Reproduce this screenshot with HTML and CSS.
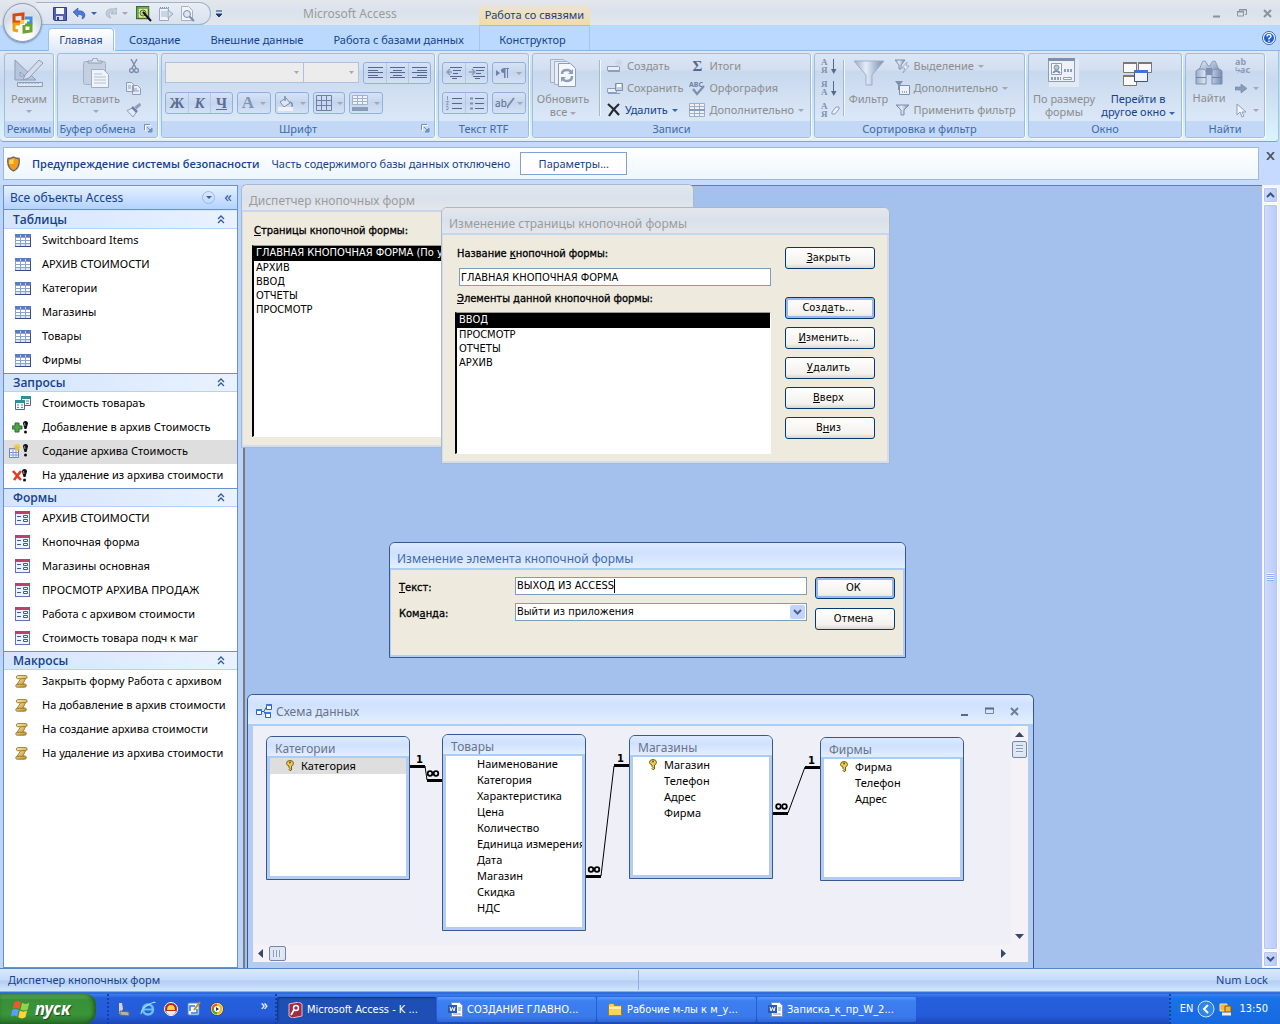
FILE: index.html
```html
<!DOCTYPE html>
<html lang="ru">
<head>
<meta charset="utf-8">
<title>Microsoft Access</title>
<link rel="stylesheet" href="styles.css">
</head>
<body>
<svg class="defs" aria-hidden="true">
  <defs>
    <linearGradient id="metal" x1="0" y1="0" x2="1" y2="1"><stop offset="0" stop-color="#e3eaf5"/><stop offset="1" stop-color="#7f94b8"/></linearGradient>
    <linearGradient id="metalH" x1="0" y1="0" x2="1" y2="0"><stop offset="0" stop-color="#9aacca"/><stop offset=".4" stop-color="#e6edf7"/><stop offset="1" stop-color="#758bb2"/></linearGradient>
    <linearGradient id="gold" x1="0" y1="0" x2="1" y2="1"><stop offset="0" stop-color="#fff3b0"/><stop offset="1" stop-color="#c08a1c"/></linearGradient>
    <linearGradient id="cellblue" x1="0" y1="0" x2="1" y2="1"><stop offset="0" stop-color="#fff"/><stop offset="1" stop-color="#c3d2ef"/></linearGradient>
    <symbol id="table" viewBox="0 0 16 13"><rect x="0" y="0" width="16" height="13" fill="#8aa2cf"/><rect x="0" y="0" width="16" height="3" fill="#5b7cc0"/><g fill="#fff"><rect x="1" y="4" width="4" height="2"/><rect x="6" y="4" width="4" height="2"/><rect x="11" y="4" width="4" height="2"/><rect x="1" y="7" width="4" height="2"/><rect x="6" y="7" width="4" height="2"/><rect x="11" y="7" width="4" height="2"/></g><g fill="#d9e4f7"><rect x="1" y="10" width="4" height="2"/><rect x="6" y="10" width="4" height="2"/><rect x="11" y="10" width="4" height="2"/></g><path d="M5.500 1v2M10.500 1v2" stroke="#c5d5f2"/><path d="M0 12.500h16M15.500 3v10" stroke="#3a4f7a"/></symbol>
    <symbol id="form" viewBox="0 0 15 14"><rect x=".5" y=".5" width="14" height="13" fill="#eef3fb" stroke="#5f77a8"/><rect x="0" y="0" width="15" height="3" fill="#b8416f"/><path d="M2 5.500h4M2 9.500h4" stroke="#3f5b97"/><path d="M8.500 4.500h4v2h-4zM8.500 8.500h4v2h-4z" fill="#fff" stroke="#3f5b97"/></symbol>
    <symbol id="macro" viewBox="0 0 14 14"><path d="M3 .6h8.500q2 .4 1.500 2.200-.3 1-1.500.9L8.500 9.800h2.800q1.200.5.9 1.900-.4 1.500-1.800 1.500H2.200q-1.600-.3-1.400-1.800.2-1.200 1.400-1.300L6 4H2.500Q1.200 3.600 1.400 2.200 1.800.8 3 .6z" fill="url(#gold)" stroke="#80601c" stroke-width=".8"/><path d="M6 3.900h5.500M2.200 10h6.300" stroke="#8a6418" stroke-width=".8"/></symbol>
    <symbol id="bang" viewBox="0 0 5 13"><path d="M2.500 0Q5 0 5 2.500L3.500 8h-2L0 2.500Q0 0 2.500 0z" fill="#111"/><circle cx="2.500" cy="11" r="1.500" fill="#111"/><path d="M1.500 2l.5 3" stroke="#999"/></symbol>
    <symbol id="key" viewBox="0 0 8 11"><path d="M4 .5q3.500 0 3.500 3Q7.500 5 5.500 6v4L4 10.700 3 9.500 4 8.500 3 7.500V6Q.5 5 .5 3.500.5.500 4 .5z" fill="#e8cc55" stroke="#7b5c10"/><circle cx="4" cy="2.500" r="1" fill="#7b5c10"/></symbol>
    <symbol id="chev" viewBox="0 0 8 9"><path d="M1 4l3-3 3 3M1 8l3-3 3 3" fill="none" stroke="#2f5b9f" stroke-width="1.300"/></symbol>
    <symbol id="word" viewBox="0 0 15 15"><path d="M3.500.5h8l3 3v11h-11z" fill="#fff" stroke="#7f93b8"/><path d="M10 6h3M10 8h3M5 12h8" stroke="#7c96c6"/><rect x="0" y="3" width="9" height="8" fill="#2b5bb0"/><path d="M2 5l1 4 1.500-3.500L6 9l1-4" fill="none" stroke="#fff"/></symbol>
    <symbol id="launch" viewBox="0 0 9 9"><path d="M.5 6V.5H6" fill="none" stroke="#7390b8"/><path d="M3 3l4 4M8 4v4H4z" stroke="#7390b8" fill="#7390b8"/><path d="M1.500 7V1.500H7" fill="none" stroke="#fff"/></symbol>
  </defs>
</svg>
<div class="app">
  <header class="header">
    <div class="title-left">
      <div class="qat">
        <button aria-label="Сохранить"><svg width="14" height="14" viewBox="0 0 14 14"><path d="M.5.5h13v13h-12l-1-1z" fill="#5460b8" stroke="#343c8c"/><rect x="3" y="1" width="8" height="6" fill="#f4f7ff"/><rect x="3" y="9" width="7" height="4" fill="#d5dbef"/><rect x="4" y="10" width="2" height="3" fill="#343c8c"/></svg></button>
        <button aria-label="Отменить"><svg width="13" height="13" viewBox="0 0 13 13"><path d="M0 5L5 1v3q6-1 7 4 0 3-3 4 2-5-4-4.500V10z" fill="#4f79d4" stroke="#2f55b0" stroke-width=".6"/></svg></button><span class="arr blue"></span>
        <button aria-label="Повторить" disabled><svg width="12" height="13" viewBox="0 0 12 13"><path d="M12 1v6H6l2-2q-4-1-4 2 0 2 2 4-5-1-5-5 1-5 8-4z" fill="#c5cedd" stroke="#9daac2" stroke-width=".7"/></svg></button><span class="arr"></span>
        <button aria-label="Конструктор"><svg width="16" height="16" viewBox="0 0 16 16"><rect x=".5" y=".5" width="12" height="12" fill="#f3e77d" stroke="#2f6f3b" stroke-width="1.500"/><path d="M1 2h12M2 1v11" stroke="#59a05e" stroke-width="1.500"/><circle cx="7" cy="7" r="3" fill="#b9cf9a" stroke="#4b7a3c"/><path d="M7 6l8 9" stroke="#111" stroke-width="2"/></svg></button>
        <button aria-label="Экспорт" disabled><svg width="16" height="16" viewBox="0 0 16 16"><path d="M1.500 2.500h9v12h-9z" fill="#eef2f8" stroke="#9aa8c0"/><path d="M2 1.500h9" stroke="#7f8fae" stroke-dasharray="1 1"/><path d="M3 6h6M3 8h6M3 10h6" stroke="#a9b5ca"/><path d="M10 4l5 4-5 4z" fill="#d5dceb" stroke="#93a3bf"/></svg></button>
        <button aria-label="Просмотр" disabled><svg width="15" height="16" viewBox="0 0 15 16"><path d="M1.500.5h7l4 4v10h-11z" fill="#f1f4fa" stroke="#a5b1c6"/><circle cx="7" cy="8" r="3.500" fill="#dbe5f4" stroke="#7d8daa"/><path d="M9.500 10.500l4.500 4.500" stroke="#7d8daa" stroke-width="2"/></svg></button>
      </div>
      <button class="qat-more" aria-label="Настройка панели"><svg width="6" height="8" viewBox="0 0 6 8"><path d="M0 1h6M0 4h6L3 7z" fill="#1f3d73" stroke="#1f3d73" stroke-width="1"/></svg></button>
      <h1>Microsoft Access</h1>
    </div>
    <div class="ctx-cap">Работа со связями</div>
    <div class="win-btns">
      <button aria-label="Свернуть"><svg width="9" height="9"><path d="M1 7.500h7" stroke="#8d939d" stroke-width="2"/></svg></button>
      <button aria-label="Восстановить"><svg width="10" height="9"><path d="M2.500 3V.5h7v5H8M.5 3h6v4h-6z" fill="none" stroke="#8d939d"/><path d="M0 2.500h7M2 1h8" stroke="#8d939d"/></svg></button>
      <button aria-label="Закрыть"><svg width="9" height="9"><path d="M1 1l7 7M8 1L1 8" stroke="#8d939d" stroke-width="2"/></svg></button>
    </div>
    <nav class="tabs" aria-label="Лента">
      <a href="#" class="tab active">Главная</a><a href="#" class="tab">Создание</a><a href="#" class="tab">Внешние данные</a><a href="#" class="tab">Работа с базами данных</a>
    </nav>
    <a href="#" class="ctx-tab">Конструктор</a>
    <div class="help-cell"><button aria-label="Справка"><svg width="14" height="14" viewBox="0 0 14 14"><circle cx="7" cy="7" r="6.500" fill="#fff" stroke="#3e62a8"/><circle cx="7" cy="7" r="5" fill="#1f5fd0"/><path d="M5 5.500q0-2 2-2t2 1.800Q9 6.500 7 7.500V8.500M7 9.500v1.500" fill="none" stroke="#fff" stroke-width="1.400"/></svg></button></div>
    <button class="office" aria-label="Кнопка Office"><svg width="23" height="24" viewBox="0 0 23 24"><g fill="none" stroke-width="3"><path d="M12 9V3L3 4v7h6" stroke="#d8480e"/><path d="M14 7h6v5h-4" stroke="#3c8fd8"/><path d="M9 13H3v6l4 1" stroke="#e9a40c"/><path d="M14 14h6v6l-7 1v-7" stroke="#6aa52a"/></g><path d="M9 9h4v4H9z" fill="#f7c948"/></svg></button>
  </header>

  <section class="ribbon">
    <div class="group g-mode"><div class="gbody">
      <button class="big" disabled><svg width="32" height="30" viewBox="0 0 32 30"><path d="M2 2v20h21zM7 14v4h5z" fill="#b8c6dd" fill-rule="evenodd" stroke="#8b9cbb"/><path d="M10 22l2-5L26 2l4 3-14 15z" fill="#d5ddeb" stroke="#8b9cbb"/><path d="M4.500 24.500h25v4h-25z" fill="#dfe6f1" stroke="#8b9cbb"/><path d="M7 24v2M10 24v2M13 24v2M16 24v2M19 24v2M22 24v2M25 24v2" stroke="#8b9cbb"/></svg><span>Режим</span><i class="arr"></i></button>
    </div><div class="glabel">Режимы</div></div>

    <div class="group g-clip"><div class="gbody">
      <button class="big wide" disabled><svg width="28" height="30" viewBox="0 0 28 30"><rect x="1.500" y="3.500" width="22" height="23" rx="2" fill="#c5cfe2" stroke="#a2b0ca"/><path d="M6 5h14V3h-4q0-3-3-3t-3 3H6z" fill="#dde4ef" stroke="#8d9dba"/><path d="M9.500 11.500h12l5 5v13h-17z" fill="#f0f4fa" stroke="#9fadc8"/><path d="M12 16h8M12 19h12M12 22h12M12 25h12" stroke="#b3bfd5"/></svg><span>Вставить</span><i class="arr"></i></button>
      <div class="rows r0"><button disabled aria-label="Вырезать"><svg width="10" height="15" viewBox="0 0 10 15"><path d="M2 0l5 9M8 0L3 9" stroke="#7e8fae" stroke-width="1.500"/><circle cx="2.500" cy="11.500" r="2" fill="none" stroke="#7e8fae" stroke-width="1.300"/><circle cx="7.500" cy="11.500" r="2" fill="none" stroke="#7e8fae" stroke-width="1.300"/></svg></button><button disabled aria-label="Копировать"><svg width="15" height="13" viewBox="0 0 15 13"><path d="M.5.500h5l2 2v7h-7zM6.500 3.500h5l3 3v6h-8z" fill="#e8eef7" stroke="#8d9dba"/><path d="M8 7h3M8 9h5M2 4h3M2 6h3" stroke="#8d9dba"/></svg></button><button disabled aria-label="Формат по образцу"><svg width="15" height="14" viewBox="0 0 15 14"><path d="M14.500 1l-5 4" stroke="#8d9dba" stroke-width="3"/><path d="M1 7.500L6.500 5l4 4L7 14z" fill="#e4eaf3" stroke="#8d9dba"/><path d="M6 4l5 5" stroke="#6f81a3" stroke-width="2.500"/></svg></button></div>
    </div><div class="glabel">Буфер обмена<svg class="dl" width="9" height="9"><use href="#launch"/></svg></div></div>

    <div class="group g-font"><div class="gbody col">
      <div class="line"><span class="combos"><select class="sel-font" disabled aria-label="Шрифт"><option></option></select><select class="sel-size" disabled aria-label="Размер"><option></option></select></span>
        <span class="seg"><button disabled aria-label="По левому краю"><svg width="15" height="12"><path d="M0 .5h15M0 3.500h10M0 5.500h15M0 8.500h10M0 10.500h15" stroke="#54688f"/></svg></button><button disabled aria-label="По центру"><svg width="15" height="12"><path d="M0 .5h15M3 3.500h9M0 5.500h15M3 8.500h9M0 10.500h15" stroke="#54688f"/></svg></button><button disabled aria-label="По правому краю"><svg width="15" height="12"><path d="M0 .5h15M5 3.500h10M0 5.500h15M5 8.500h10M0 10.500h15" stroke="#54688f"/></svg></button></span></div>
      <div class="line"><span class="seg serif"><button disabled><b>Ж</b></button><button disabled><b><i>К</i></b></button><button disabled><b><u>Ч</u></b></button></span>
        <span class="seg serif"><button class="w34 big-a" disabled>A<i class="arr"></i></button></span>
        <span class="seg"><button class="w34" disabled aria-label="Заливка"><svg width="16" height="15" viewBox="0 0 16 15"><path d="M2 6l6-4 4 5-6 4z" fill="#dfe6f1" stroke="#7e8fae"/><path d="M7 0v5M12 6q3 1 2 5" fill="none" stroke="#7e8fae" stroke-width="1.500"/><path d="M0 13h15" stroke="#eef1f6" stroke-width="4"/></svg><i class="arr"></i></button></span>
        <span class="seg"><button class="w32" disabled aria-label="Сетка"><svg width="16" height="16"><path d="M.5.500h15v15H.5zM5.500 0v16M10.500 0v16M0 5.500h16M0 10.500h16" fill="none" stroke="#6d80a5"/></svg><i class="arr"></i></button></span>
        <span class="seg"><button class="w34" disabled aria-label="Цвет строк"><svg width="16" height="16"><path d="M.5.500h15v9H.5zM5.500 0v10M10.500 0v10M0 3.500h16M0 6.500h16" fill="#eef2f8" stroke="#a3b1ca"/><path d="M0 14h16" stroke="#8b9cbb" stroke-width="4"/></svg><i class="arr"></i></button></span></div>
    </div><div class="glabel">Шрифт<svg class="dl" width="9" height="9"><use href="#launch"/></svg></div></div>

    <div class="group g-rtf"><div class="gbody col">
      <div class="line"><span class="seg"><button disabled aria-label="Уменьшить отступ"><svg width="16" height="14"><path d="M4 1.500h12M7 4.500h8M7 7.500h5M4 10.500h12M6 12.500h5" stroke="#54688f"/><path d="M1 6h5M4 3L1 6l3 3" fill="none" stroke="#8b9cbb" stroke-width="1.500"/></svg></button><button disabled aria-label="Увеличить отступ"><svg width="16" height="14"><path d="M4 1.500h12M7 4.500h8M7 7.500h5M4 10.500h12M6 12.500h5" stroke="#54688f"/><path d="M0 6h5M3 3l3 3-3 3" fill="none" stroke="#8b9cbb" stroke-width="1.500"/></svg></button></span>
        <span class="seg"><button class="w34" disabled aria-label="Направление"><svg width="14" height="10"><path d="M0 2l4 3-4 3zM9 0q-4 0-4 2.500T8 5v5h1.500V1H11v9h1V1h1V0z" fill="#6d80a5"/></svg><i class="arr"></i></button></span></div>
      <div class="line"><span class="seg"><button disabled aria-label="Нумерация"><svg width="16" height="14"><path d="M6 2.500h10M6 7.500h10M6 12.500h10" stroke="#54688f"/><path d="M1.500 0v4M0 5.500h2.500L.5 8.500h2M0 10.500h2v3H0" fill="none" stroke="#8b9cbb"/></svg></button><button disabled aria-label="Маркеры"><svg width="14" height="14"><path d="M5 2.500h9M5 7.500h9M5 12.500h9" stroke="#54688f"/><path d="M0 2.500h3M0 7.500h3M0 12.500h3" stroke="#7e8fae" stroke-width="2"/></svg></button></span>
        <span class="seg"><button class="w34 ab" disabled>ab<svg width="8" height="12"><path d="M7 1L1 9l-1 2" stroke="#7e8fae" stroke-width="2" fill="none"/></svg><i class="arr"></i></button></span></div>
    </div><div class="glabel">Текст RTF</div></div>

    <div class="group g-rec"><div class="gbody">
      <button class="big refresh" disabled><svg width="26" height="30" viewBox="0 0 26 30"><path d="M.5 1.500h13l3 3v20h-16z" fill="#dfe6f2" stroke="#a2b0ca"/><path d="M4.500 3.500h13l3 3v20h-16z" fill="#e8edf6" stroke="#a2b0ca"/><path d="M8.500 5.500h12l5 5v18h-17z" fill="#f4f7fc" stroke="#8d9dba"/><path d="M12 16q0-4 5-4 3 0 4 2M22 18q0 5-5 5-3 0-4-2" fill="none" stroke="#8d9dba" stroke-width="2.500"/><path d="M23 11v5h-5zM11 24v-5h5z" fill="#8d9dba"/></svg><span>Обновить<br>все <i class="arr"></i></span></button>
      <i class="vsep"></i>
      <div class="rows r1"><button disabled><svg width="16" height="14"><path d="M.5 7.500h12v4H.5z" fill="#e8eef7" stroke="#8d9dba"/><path d="M1 12.500h12" stroke="#8d9dba"/><path d="M12 0v8M8 4h8M9 1l6 6M15 1L9 7" stroke="#c6d2e6"/></svg>Создать</button><button disabled><svg width="16" height="13"><path d="M.5 6.500h9v4h-9z" fill="#e8eef7" stroke="#8d9dba"/><path d="M8.500 1.500h7v7h-7z" fill="#c0cce2" stroke="#7e8fae"/><path d="M10 2h4v3h-4z" fill="#fff"/><path d="M1 11.500h12" stroke="#8d9dba"/></svg>Сохранить</button><button class="on"><svg width="14" height="14"><path d="M1 1q6 5 11 11M12 1Q6 6 2 13" fill="none" stroke="#26282c" stroke-width="2.200"/></svg>Удалить<i class="arr blue"></i></button></div>
      <div class="rows r2"><button disabled><span class="sigma">Σ</span>Итоги</button><button disabled><svg width="16" height="15"><text x="0" y="6" class="abc">ABC</text><path d="M4 8l4 5 7-8" fill="none" stroke="#7e8fae" stroke-width="2.200"/></svg>Орфография</button><button disabled><svg width="16" height="14"><path d="M.5.500h15v13H.5zM5.500 0v14M10.500 0v14M0 3.500h16M0 10.500h16" fill="#eef2f8" stroke="#9fadc8"/><path d="M0 7h16" stroke="#8b9cbb" stroke-width="2"/></svg>Дополнительно<i class="arr"></i></button></div>
    </div><div class="glabel">Записи</div></div>

    <div class="group g-sort"><div class="gbody">
      <div class="rows az"><button disabled aria-label="По возрастанию"><span>А<br>Я</span><svg width="6" height="15"><path d="M2.500 0v12" stroke="#54688f"/><path d="M0 10h5.500L2.800 15z" fill="#54688f"/></svg></button><button disabled aria-label="По убыванию"><span>Я<br>А</span><svg width="6" height="15"><path d="M2.500 0v12" stroke="#54688f"/><path d="M0 10h5.500L2.800 15z" fill="#54688f"/></svg></button><button disabled aria-label="Очистить"><span>А<br>Я</span><svg width="9" height="9"><path d="M1 6l4-5h3l0 2-4 5H1z" fill="#eef2f8" stroke="#8d9dba"/></svg></button></div>
      <i class="vsep"></i>
      <button class="big filt" disabled><svg width="32" height="30" viewBox="0 0 32 30"><path d="M1 3h30L19 17v10h-6V17z" fill="url(#metalH)" stroke="#9fadc8"/></svg><span>Фильтр</span></button>
      <div class="rows r3"><button disabled><svg width="15" height="14"><path d="M0 1h10L6 6v4H4V6z" fill="url(#metalH)" stroke="#7e8fae"/><path d="M12 3L7 9h3l-2 5 6-7h-3z" fill="#eef2f8" stroke="#9fadc8"/></svg>Выделение<i class="arr"></i></button><button disabled><svg width="15" height="14"><path d="M4.500 4.500h10v9h-10z" fill="#eef2f8" stroke="#7e8fae"/><path d="M0 0h8L5 4v5H3V4z" fill="#7e8fae"/><path d="M7 11h1M9 11h1M11 11h1" stroke="#54688f"/></svg>Дополнительно<i class="arr"></i></button><button disabled><svg width="15" height="12"><path d="M1 1h13L9 6v5H6V6z" fill="url(#metalH)" stroke="#7e8fae"/></svg>Применить фильтр</button></div>
    </div><div class="glabel">Сортировка и фильтр</div></div>

    <div class="group g-win"><div class="gbody">
      <button class="big fit" disabled><svg width="32" height="30" viewBox="0 0 32 30"><rect x="1" y="1" width="30" height="28" fill="#e3eaf5"/><path d="M.5.500h26v23H.5z" fill="#edf1f8" stroke="#8d9dba"/><path d="M0 1.500h27" stroke="#7e8fae" stroke-width="3"/><path d="M3.500 5.500h10v11h-10z" fill="#fff" stroke="#8d9dba"/><circle cx="8.500" cy="9.500" r="2.500" fill="#b7c4da" stroke="#7e8fae"/><path d="M5 15q3-4 7 0" fill="none" stroke="#7e8fae" stroke-width="2"/><path d="M16 12.500h8M3 20.500h10" stroke="#8d9dba" stroke-width="3" stroke-dasharray="2 1"/><path d="M15.500 19.500h8v2h-8z" fill="#fff" stroke="#8d9dba"/></svg><span>По размеру<br>формы</span></button>
      <button class="big on switch"><svg width="32" height="30" viewBox="0 0 32 30"><g fill="#fafafa" stroke="#7d7770"><path d="M1.500 4.500h13v10h-13zM16.500 4.500h13v10h-13zM1.500 17.500h13v10h-13z"/></g><path d="M1 5h14M16 5h14M1 18h14" stroke="#7d7770" stroke-width="2"/><path d="M12.500 12.500h13v11h-13z" fill="#f0f4ff" stroke="#3a5580"/><path d="M12 13.500h14" stroke="#3f73dc" stroke-width="3"/></svg><span>Перейти в<br>другое окно <i class="arr blue"></i></span></button>
    </div><div class="glabel">Окно</div></div>

    <div class="group g-find"><div class="gbody">
      <button class="big find" disabled><svg width="28" height="28" viewBox="0 0 28 28"><path d="M4 11L7 4q0-2 2-2t2.500 2L13 7h2l1.500-3Q17 2 19 2t2 2l3 7-4 2H8z" fill="url(#metal)" stroke="#8b9cbb"/><path d="M1 13q0-3 5-3t5 3v12H1zM17 13q0-3 5-3t5 3v12H17z" fill="url(#metalH)" stroke="#7e8fae"/><path d="M11 9h6v7h-6z" fill="#7e90b2"/><path d="M1 18.500h10M17 18.500h10" stroke="#6f82a6"/></svg><span>Найти</span></button>
      <div class="rows r4"><button class="rep" disabled aria-label="Заменить"><svg width="17" height="16"><text x="0" y="7">ab</text><text x="5" y="15">ac</text><path d="M1 9v3.500h4M3 10.500l2 2-2 2" fill="none" stroke="#8b9cbb"/></svg></button><button disabled aria-label="Перейти"><svg width="12" height="9"><path d="M0 3h6V0l6 4.500L6 9V6H0z" fill="#8b9cbb" stroke="#6d80a5" stroke-width=".6"/></svg><i class="arr"></i></button><button disabled aria-label="Выделить"><svg width="12" height="15"><path d="M2 1v11l3-3 2 5 2-1-2-4h4z" fill="#f4f6fa" stroke="#8d9dba"/></svg><i class="arr"></i></button></div>
    </div><div class="glabel">Найти</div></div>
  </section>

  <section class="message">
    <div class="msg-box">
      <svg width="13" height="16" viewBox="0 0 13 16"><path d="M6.500 1Q9 2.500 12 2.500q1.500 9-5.500 12.500Q-.5 11.500 1 2.500 4 2.500 6.500 1z" fill="#f59a16" stroke="#5e6470" stroke-width="1.300"/><path d="M2.500 4Q5 4 6.500 2.800V8H2.200z" fill="#ffd257"/></svg>
      <strong>Предупреждение системы безопасности</strong>
      <span>Часть содержимого базы данных отключено</span>
      <button class="opts">Параметры...</button>
    </div>
    <button class="msg-x" aria-label="Закрыть"><svg width="9" height="8"><path d="M1 0l7 8M8 0L1 8" stroke="#53565c" stroke-width="1.800"/></svg></button>
  </section>

  <main class="work">
    <aside class="nav">
      <div class="nav-head"><span>Все объекты Access</span><button class="nav-dd" aria-label="Фильтр"><i class="arr blue"></i></button><button class="nav-fold">«</button></div>
      <section><h2>Таблицы<svg width="8" height="9"><use href="#chev"/></svg></h2><ul>
        <li><svg width="16" height="13"><use href="#table"/></svg><a href="#">Switchboard Items</a></li>
        <li><svg width="16" height="13"><use href="#table"/></svg><a href="#">АРХИВ СТОИМОСТИ</a></li>
        <li><svg width="16" height="13"><use href="#table"/></svg><a href="#">Категории</a></li>
        <li><svg width="16" height="13"><use href="#table"/></svg><a href="#">Магазины</a></li>
        <li><svg width="16" height="13"><use href="#table"/></svg><a href="#">Товары</a></li>
        <li><svg width="16" height="13"><use href="#table"/></svg><a href="#">Фирмы</a></li></ul></section>
      <section><h2>Запросы<svg width="8" height="9"><use href="#chev"/></svg></h2><ul>
        <li><svg width="16" height="15" viewBox="0 0 16 15"><path d="M6.500.500h9v9h-9z" fill="#f4f8fa" stroke="#4d6a80"/><path d="M6 1.500h10" stroke="#2f8f94" stroke-width="3"/><path d="M.5 4.500h9v9h-9z" fill="#f4f8fa" stroke="#4d6a80"/><path d="M0 5.500h10" stroke="#2f8f94" stroke-width="3"/><path d="M2 9h2M6 9h2M2 11.500h2M6 11.500h2M11 5h3M11 7.500h3" stroke="#6d7f9a"/></svg><a href="#">Стоимость товараъ</a></li>
        <li><svg class="q" width="17" height="13" viewBox="0 0 17 13"><path d="M3 2h4v3h3v3H7v3H3V8H0V5h3z" fill="#4fa34a" stroke="#2a6b2c"/><use href="#bang" x="11" width="5" height="13"/></svg><a href="#">Добавление в архив Стоимость</a></li>
        <li class="sel"><svg class="q" width="20" height="14" viewBox="0 0 20 14"><path d="M.5 4.500h9v9h-9z" fill="#fff" stroke="#6d86b8"/><path d="M0 5h9M1 8.500h8M1 11h8M4 6v8M7 6v8" stroke="#7b97cd"/><path d="M8 0v7M4.500 3.500h7M5.500 1l5 5M10.500 1l-5 5" stroke="#f0c526" stroke-width="1.200"/><use href="#bang" x="14" width="5" height="13"/></svg><a href="#">Содание архива Стоимость</a></li>
        <li><svg class="q" width="17" height="13" viewBox="0 0 17 13"><path d="M1 2l8 9M9 2L2 11" stroke="#e23a22" stroke-width="2.600"/><use href="#bang" x="10" width="5" height="13"/></svg><a href="#">На удаление из архива стоимости</a></li></ul></section>
      <section><h2>Формы<svg width="8" height="9"><use href="#chev"/></svg></h2><ul>
        <li><svg width="15" height="14"><use href="#form"/></svg><a href="#">АРХИВ СТОИМОСТИ</a></li>
        <li><svg width="15" height="14"><use href="#form"/></svg><a href="#">Кнопочная форма</a></li>
        <li><svg width="15" height="14"><use href="#form"/></svg><a href="#">Магазины основная</a></li>
        <li><svg width="15" height="14"><use href="#form"/></svg><a href="#">ПРОСМОТР АРХИВА ПРОДАЖ</a></li>
        <li><svg width="15" height="14"><use href="#form"/></svg><a href="#">Работа с архивом стоимости</a></li>
        <li><svg width="15" height="14"><use href="#form"/></svg><a href="#">Стоимость товара подч к маг</a></li></ul></section>
      <section><h2>Макросы<svg width="8" height="9"><use href="#chev"/></svg></h2><ul>
        <li><svg width="13" height="13"><use href="#macro"/></svg><a href="#">Закрыть форму Работа с архивом</a></li>
        <li><svg width="13" height="13"><use href="#macro"/></svg><a href="#">На добавление в архив стоимости</a></li>
        <li><svg width="13" height="13"><use href="#macro"/></svg><a href="#">На создание архива стоимости</a></li>
        <li><svg width="13" height="13"><use href="#macro"/></svg><a href="#">На удаление из архива стоимости</a></li></ul></section>
    </aside>
    <div class="mdi"></div>
    <div class="vscroll"><button aria-label="Вверх"><svg width="9" height="6"><path d="M1 5l3.500-3.500L8 5" fill="none" stroke="#3c5587" stroke-width="2"/></svg></button><div class="thumb"><i></i></div><button aria-label="Вниз"><svg width="9" height="6"><path d="M1 1l3.500 3.500L8 1" fill="none" stroke="#3c5587" stroke-width="2"/></svg></button></div>

    <section class="window inactive dispatcher"><h3>Диспетчер кнопочных форм</h3>
      <div class="wbody"><div class="lab"><u>С</u>траницы кнопочной формы:</div>
        <ul class="list"><li class="sel">ГЛАВНАЯ КНОПОЧНАЯ ФОРМА (По умолчанию)</li><li>АРХИВ</li><li>ВВОД</li><li>ОТЧЕТЫ</li><li>ПРОСМОТР</li></ul></div>
    </section>

    <section class="window inactive page"><h3>Изменение страницы кнопочной формы</h3>
      <div class="wbody">
        <div class="fields"><label class="lab" for="pname">Название <u>к</u>нопочной формы:</label><input id="pname" value="ГЛАВНАЯ КНОПОЧНАЯ ФОРМА">
          <div class="lab"><u>Э</u>лементы данной кнопочной формы:</div>
          <ul class="list"><li class="sel">ВВОД</li><li>ПРОСМОТР</li><li>ОТЧЕТЫ</li><li>АРХИВ</li></ul></div>
        <div class="btns"><button class="xp"><span><u>З</u>акрыть</span></button><button class="xp default"><span>Созд<u>а</u>ть...</span></button><button class="xp"><span><u>И</u>зменить...</span></button><button class="xp"><span><u>У</u>далить</span></button><button class="xp"><span><u>В</u>верх</span></button><button class="xp"><span>В<u>н</u>из</span></button></div>
      </div>
    </section>

    <section class="window element"><h3>Изменение элемента кнопочной формы</h3>
      <div class="wbody">
        <div class="form"><label class="lab" for="etext"><u>Т</u>екст:</label><span class="caret-box"><input id="etext" value="ВЫХОД ИЗ ACCESS"></span>
          <label class="lab" for="ecmd">Ком<u>а</u>нда:</label><select id="ecmd"><option>Выйти из приложения</option></select></div>
        <div class="btns"><button class="xp default">ОК</button><button class="xp">Отмена</button></div>
      </div>
    </section>

    <section class="window schema"><h3><svg width="16" height="15" viewBox="0 0 16 15"><g fill="#fff" stroke="#3c5f9f"><path d="M.5 5.500h5v5h-5zM10.500.500h5v5h-5zM9.500 8.500h5v5h-5z"/></g><path d="M0 6h6M10 1h6M9 9h6" stroke="#3f78d8" stroke-width="2"/><path d="M6 7.500h2l2-4M8 7.500l2 4" fill="none" stroke="#3c5f9f"/></svg><span>Схема данных</span>
        <button aria-label="Свернуть"><svg width="9" height="10"><path d="M1 8h7" stroke="#5c6a80" stroke-width="2"/></svg></button><button aria-label="Развернуть"><svg width="9" height="9"><path d="M.5 1.500h8v5h-8z" fill="none" stroke="#7186a8"/><path d="M0 1.500h9" stroke="#5c6a80" stroke-width="2"/></svg></button><button aria-label="Закрыть"><svg width="9" height="9"><path d="M1 1l7 7M8 1L1 8" stroke="#6d7f9e" stroke-width="2"/></svg></button></h3>
      <div class="sbody">
        <div class="canvas">
          <svg class="links" width="760" height="218"><g stroke="#000" fill="none"><path d="M157 40.500h15M174 54.500h15M333 150.500h15M361 39.500h15M520 87.500h15M552 41.500h15" stroke-width="3"/><path d="M172 40l2 14M348 150l13-110M535 87l17-46"/></g>
            <g fill="none" stroke="#000" stroke-width="1.800"><circle cx="177" cy="47.500" r="2.300"/><circle cx="183" cy="47.500" r="2.300"/><circle cx="338" cy="143.500" r="2.300"/><circle cx="344" cy="143.500" r="2.300"/><circle cx="525.500" cy="80.500" r="2.300"/><circle cx="531.500" cy="80.500" r="2.300"/></g>
            <text x="163" y="37">1</text><text x="364" y="36">1</text><text x="555" y="38">1</text></svg>
          <div class="node n1"><h4>Категории</h4><ul><li class="sel"><svg width="8" height="11"><use href="#key"/></svg>Категория</li></ul></div>
          <div class="node n2"><h4>Товары</h4><ul><li>Наименование</li><li>Категория</li><li>Характеристика</li><li>Цена</li><li>Количество</li><li>Единица измерения</li><li>Дата</li><li>Магазин</li><li>Скидка</li><li>НДС</li></ul></div>
          <div class="node n3"><h4>Магазины</h4><ul><li><svg width="8" height="11"><use href="#key"/></svg>Магазин</li><li>Телефон</li><li>Адрес</li><li>Фирма</li></ul></div>
          <div class="node n4"><h4>Фирмы</h4><ul><li><svg width="8" height="11"><use href="#key"/></svg>Фирма</li><li>Телефон</li><li>Адрес</li></ul></div>
        </div>
        <div class="sv"><svg width="9" height="5"><path d="M0 5L4.500 0 9 5z" fill="#35486d"/></svg><i class="grip"></i><svg width="9" height="5"><path d="M0 0l4.500 5L9 0z" fill="#35486d"/></svg></div>
        <div class="sh"><svg width="5" height="9"><path d="M5 0L0 4.500 5 9z" fill="#35486d"/></svg><i class="grip"></i><svg width="5" height="9"><path d="M0 0l5 4.500L0 9z" fill="#35486d"/></svg></div>
      </div>
    </section>
  </main>

  <div class="status"><span>Диспетчер кнопочных форм</span><span class="r">Num Lock</span></div>

  <footer class="taskbar">
    <button class="start"><svg width="20" height="19" viewBox="0 0 18 17"><path d="M3 2q3-2 6 0L7.500 8q-3-2-6 0z" fill="#f0582c"/><path d="M10 2.500q3 2 6.500 0L15 8.500q-3 2-6.500 0z" fill="#8fd44c"/><path d="M1 9q3-2 6 0l-1.500 6q-3-2-5.500 0z" fill="#5b9cff"/><path d="M8 9.500q3 2 6.500 0L13 15.500q-3 2-6.500 0z" fill="#ffd433"/></svg><span>пуск</span></button>
    <div class="ql">
      <svg width="16" height="16"><path d="M2 2h3l1 6-3 5H2z" fill="#d9d3c5"/><path d="M3 10l9 1v4l-9-1z" fill="#b8b3a6" stroke="#666"/></svg>
      <svg width="16" height="16"><circle cx="8" cy="8.500" r="5" fill="none" stroke="#6cc1f5" stroke-width="2.500"/><path d="M3 8.500h10" stroke="#6cc1f5" stroke-width="2"/><path d="M1 13Q1 8 8 4t7-2" fill="none" stroke="#a7dbfa" stroke-width="1.300"/></svg>
      <svg width="16" height="16"><circle cx="8" cy="8" r="6.500" fill="#b3271e" stroke="#fff"/><path d="M4 9q0-5 4-5t4 5z" fill="#f7d24a"/><path d="M3 10h10q-1 4-5 4t-5-4z" fill="#f3eee6"/></svg>
      <svg width="16" height="16"><rect x="2" y="2" width="11" height="12" rx="1" fill="#f4f8ff" stroke="#4e86c6"/><path d="M4 10V5h5M5 12h6V8" fill="none" stroke="#2e7bd0" stroke-width="1.500"/><path d="M14 1L8 9" stroke="#c98d20" stroke-width="2"/></svg>
      <svg width="16" height="16"><circle cx="8" cy="8" r="6.500" fill="#fff" stroke="#444"/><path d="M8 8V2.500A5.500 5.500 0 0 0 2.500 8z" fill="#e2601e"/><path d="M8 8H2.500A5.500 5.500 0 0 0 8 13.500z" fill="#53a52e"/><path d="M8 8v5.500A5.500 5.500 0 0 0 8 2.500z" fill="#f0be1c"/><circle cx="8" cy="8" r="3" fill="#fff"/><path d="M7 6l3 2-3 2z" fill="#16355f"/></svg>
      <span class="more">»</span>
    </div>
    <div class="tasks">
      <button class="active"><svg width="15" height="16" viewBox="0 0 15 16"><path d="M1 2l10-2 3 2v12l-10 2-3-2z" fill="#a12b45" stroke="#e7b9c3"/><circle cx="8" cy="6" r="2.500" fill="none" stroke="#fff" stroke-width="1.500"/><path d="M6 8l-3 5" stroke="#fff" stroke-width="1.800"/></svg><span>Microsoft Access - K ...</span></button>
      <button><svg width="15" height="15"><use href="#word"/></svg><span>СОЗДАНИЕ ГЛАВНО...</span></button>
      <button><svg width="15" height="13" viewBox="0 0 15 13"><path d="M.5 2.500l1-2h4l1 2h7v10H.5z" fill="#f7d35b" stroke="#a77d1c"/><path d="M1 5h12" stroke="#fff2b5" stroke-width="2"/></svg><span>Рабочие м-лы к м_у...</span></button>
      <button><svg width="15" height="15"><use href="#word"/></svg><span>Записка_к_пр_W_2...</span></button>
    </div>
    <div class="tray"><span>EN</span><svg width="18" height="18"><circle cx="9" cy="9" r="8" fill="#2f86e8" stroke="#cfe6fb"/><path d="M11 5L7 9l4 4" fill="none" stroke="#fff" stroke-width="2"/></svg><svg width="14" height="15"><path d="M1 2h7v7H1z" fill="#f2b83a" stroke="#fbe3a4"/><path d="M6 4h6v6H6z" fill="#f2b83a" stroke="#8a5b10"/><path d="M3 12h9" stroke="#eee" stroke-width="3"/></svg><time>13:50</time></div>
  </footer>
</div>
</body>
</html>
```
FILE: styles.css
```css
* { box-sizing: border-box; }
body { margin: 0; font: 11px/14px "Noto Sans", "Open Sans", sans-serif; color: #000; overflow: hidden; }
button, input, select { font: inherit; color: inherit; margin: 0; padding: 0; border: 0; background: none; }
h1, h2, h3, h4, ul { margin: 0; padding: 0; font-weight: normal; list-style: none; }
a { color: inherit; text-decoration: none; }
svg { flex: none; display: block; }
.defs { position: absolute; width: 0; height: 0; }
.app { display: flex; flex-direction: column; height: 100vh; background: #c6daff; }

.arr { display: inline-block; flex: none; border: 3px solid transparent; border-top-color: #a2a8b4; border-bottom: 0; width: 6px; height: 3px; vertical-align: middle; }
.arr.blue { border-top-color: #3565ae; }

/* Title bar and tab strip */
.header { position: relative; display: grid; grid-template-columns: 479px 111px 1fr; grid-template-rows: 27px 23px; color: #15428b;
  background: linear-gradient(#e4e8ed, #dae2ec 12px, #e3e7eb 25px, #b5dcf0 25px, #bbd9fe 27px); border-bottom: 1px solid #8db2e3; }
.title-left { display: flex; align-items: center; padding-left: 36px; }
.qat { display: flex; align-items: center; gap: 6px; height: 23px; width: 175px; padding-left: 17px; border: 1px solid #9fb3cc; border-left: 0; border-radius: 0 12px 12px 0; background: linear-gradient(#e9eef5, #d8e1ee); }
.qat .arr { margin: 0 2px 0 -1px; }
.qat-more { margin: 0 0 0 5px; }
h1 { flex: 1; font-size: 12px; color: #9b9b9b; padding-left: 81px; line-height: 28px; }
.ctx-cap { margin-top: 5px; text-align: center; line-height: 20px; height: 21px; border-bottom: 1px solid #f0b822; background: linear-gradient(#ebe3da, #f1dda6); white-space: nowrap; }
.win-btns { display: flex; justify-content: flex-end; align-items: center; gap: 16px; padding-right: 8px; }
.tabs { display: flex; padding: 1px 0 0 48px; white-space: nowrap; }
.tab { line-height: 24px; padding: 0 15px; }
.tab.active { width: 66px; padding: 0; text-align: center; border: 1px solid #a0c0ea; border-bottom: 0; border-radius: 4px 4px 0 0; background: linear-gradient(#fff, #dfe9f7); line-height: 22px; margin-bottom: -1px; box-shadow: 1px 0 #fff; }
.ctx-tab { text-align: center; line-height: 26px; padding-right: 4px; border: solid #a9c4e4; border-width: 0 1px; }
.help-cell { display: flex; justify-content: flex-end; align-items: center; padding: 0 4px 2px 0; }
.office { position: absolute; left: 3px; top: 3px; width: 39px; height: 39px; border-radius: 50%; border: 1px solid #8b9ab1; display: grid; place-items: center; background: radial-gradient(circle at 50% 80%, #fff 20%, #d4dce8 60%, #eef2f7); box-shadow: 0 1px 2px #7084a3; }

/* Ribbon */
.ribbon { display: flex; gap: 3px; padding: 2px 4px 3px; height: 91px; margin-right: 1px; border-right: 1px solid #9cc; border-bottom: 1px solid #7ea6cf; border-radius: 0 0 4px 4px; background: linear-gradient(#dde8f7, #c8d8ee 30px, #dcf4fe); }
.group { flex: none; display: flex; flex-direction: column; border: 1px solid #9dbfdc; border-radius: 3px; background: linear-gradient(#dbe5f5, #d3dff0 16px, #c8d8ed 17px, #dbe8f8 68px); box-shadow: 1px 1px #f4faff; overflow: hidden; }
.gbody { flex: 1; display: flex; }
.glabel { position: relative; height: 16px; line-height: 15px; text-align: center; color: #3e6aaa; background: #c2d8f6; white-space: nowrap; }
.dl { position: absolute; right: 4px; top: 3px; }
.g-mode { width: 50px; } .g-clip { width: 101px; } .g-font { width: 274px; } .g-rtf { width: 91px; } .g-rec { width: 279px; } .g-sort { width: 211px; } .g-win { width: 154px; } .g-find { width: 80px; }
.g-clip .glabel { padding-right: 20px; }
.group button { color: #8d8d8d; white-space: nowrap; }
.group button.on { color: #15428b; }
.big { display: flex; flex-direction: column; align-items: center; padding-top: 4px; width: 48px; }
.big span { margin-top: 4px; line-height: 13px; text-align: center; }
.big > .arr { margin-top: 5px; }
.big.wide { width: 68px; padding-left: 8px; }
.refresh { width: 60px; } .filt { width: 48px; } .fit { width: 70px; } .switch { width: 78px; } .find { width: 46px; padding-top: 5px; }
.rows { display: flex; flex-direction: column; padding-top: 1px; }
.rows button { display: flex; align-items: center; gap: 4px; height: 22px; }
.r0 { align-items: center; }
.r2 { padding-left: 6px; } .r3 { padding-left: 2px; }
.r4 { padding-left: 1px; } .r4 button { gap: 6px; padding-left: 2px; }
.rep text { font: bold 9px "Noto Sans", sans-serif; fill: #8b9cbb; }
.sigma { width: 16px; text-align: center; font: bold 15px/16px "Liberation Serif", serif; color: #54688f; }
.abc { font: bold 7px "Noto Sans", sans-serif; fill: #6d80a5; }
.az { padding-left: 6px; } .az button { gap: 3px; } .az span { font: bold 9px/8px "Liberation Serif", serif; color: #7e8fae; }
.vsep { width: 2px; margin: 6px 6px 5px 6px; border-left: 1px solid #a0b9da; border-right: 1px solid #f2f7fd; }
.az + .vsep { margin: 6px 0 5px 3px; }
.col { flex-direction: column; gap: 8px; padding: 8px 3px 0; }
.line { display: flex; gap: 4px; }
.combos { display: flex; }
.combos select { appearance: none; height: 21px; border: 1px solid #abc1de; background: #ececec url("data:image/svg+xml,%3Csvg xmlns='http://www.w3.org/2000/svg' width='5' height='3'%3E%3Cpath d='M0 0h5L2.500 3z' fill='%23a2a8b4'/%3E%3C/svg%3E") no-repeat right 4px center; opacity: 1; }
.sel-font { width: 139px; } .combos .sel-size { width: 55px; border-left: 0; }
.seg { display: flex; border: 1px solid #92b0dc; border-radius: 3px; height: 22px; background: linear-gradient(#d7e3f5, #c4d5ee 10px, #d3e1f5); }
.seg button { width: 22px; display: flex; align-items: center; justify-content: center; border-left: 1px solid #b2c8e8; }
.seg button:first-child { border-left: 0; }
.seg button.w34 { width: 32px; gap: 4px; } .seg button.w32 { width: 30px; gap: 3px; }
.seg .arr { margin-left: 2px; }
.seg.serif button { font: 15px/18px "Liberation Serif", serif; color: #5b6d92; }
.seg.serif .big-a { font-size: 17px; font-weight: bold; color: #8194b5; }
.seg button.ab { gap: 0; font-size: 10px; color: #54688f; }

/* Message bar */
.message { display: flex; align-items: flex-start; gap: 7px; height: 43px; padding: 5px 5px 0 3px; color: #15428b; }
.msg-box { flex: 1; display: flex; align-items: center; gap: 12px; height: 33px; padding-left: 3px; border: 1px solid #9fbad8; background: linear-gradient(#fff, #edf6fd); }
.msg-box span { margin-right: -2px; }
strong { font: 600 11px/14px "Open Sans", sans-serif; }
.opts { width: 107px; height: 23px; border: 1px solid #7fa3cf; background: #fff; }
.msg-x { padding-top: 5px; }

/* Work area */
.work { position: relative; flex: 1; display: flex; min-height: 0; background: #bcd4fb; }
.nav { width: 235px; margin: 0 0 0 3px; border: 1px solid #6593cf; background: #fff; }
.nav-head { display: flex; align-items: center; height: 24px; padding: 0 5px 0 6px; font-size: 12px; color: #15428b; background: linear-gradient(#e6f0ff, #b3d2ff); border-bottom: 1px solid #6593cf; }
.nav-head span { flex: 1; }
.nav-dd { display: grid; place-items: center; width: 13px; height: 13px; border: 1px solid #a3b8d6; border-radius: 50%; }
.nav-fold { margin-left: 9px; font-size: 15px; color: #2f5b9f; padding-bottom: 3px; }
.nav h2 { display: flex; align-items: center; justify-content: space-between; height: 19px; padding: 0 12px 0 9px; font-size: 12px; font-weight: bold; color: #15428b; background: linear-gradient(90deg, #d5e5fd, #e9f2ff); border-top: 1px solid #6593cf; border-bottom: 1px solid #b3d2ff; }
.nav h2 { font-family: "Open Sans", sans-serif; font-weight: 600; }
.nav section:first-of-type h2 { border-top-color: #d5e5fd; }
.nav li { display: flex; align-items: center; height: 24px; padding: 0 0 2px 11px; white-space: nowrap; }
.nav li svg { margin-right: 11px; }
.nav li svg[width="15"] { margin-right: 12px; }
.nav li svg[width="13"] { margin-right: 14px; }
.nav li svg.q[width="17"] { margin: 0 13px 0 -3px; }
.nav li svg.q[width="20"] { margin: 0 13px 0 -6px; }
.nav li.sel { background: #dedede; }
.mdi { flex: 1; margin-left: 5px; border-left: 2px solid #7b7b7b; border-top: 1px solid #7b7b7b; background: #a4c1ee; }
.vscroll { width: 18px; display: flex; flex-direction: column; gap: 1px; padding: 2px 2px 1px 1px; background: #f4f5fb; }
.vscroll button, .thumb { display: grid; place-items: center; border: 1px solid #fff; border-radius: 2px; background: linear-gradient(90deg, #cfdcfd, #b8cbf9); box-shadow: 0 0 0 1px #b4c6ee inset; }
.vscroll button { height: 16px; }
.thumb { flex: 1; }
.thumb i { width: 7px; height: 8px; background: repeating-linear-gradient(#eef4fe 0 1px, #8cb0f8 1px 2px); }

/* Windows */
.window { position: absolute; display: flex; flex-direction: column; border: 1px solid #36598f; border-radius: 6px 6px 0 0; background: #b5ccf2; overflow: hidden; }
.window h3 { flex: none; height: 27px; line-height: 32px; padding-left: 7px; font-size: 12px; color: #3e6aaa; white-space: nowrap; background: linear-gradient(#dde9ff, #cfe1ff 10px, #e3efff 25px, #a9cdf7 25px); }
.window.inactive { border-color: #a9b9cd; background: #d3dded; }
.window.inactive h3 { color: #9b9b9b; background: linear-gradient(#e4e7eb, #dae1ec 12px, #e4e7ea 25px, #c5d6ee 25px); }
.wbody { flex: 1; display: flex; margin: 0 2px 2px 1px; background: #eeeade; font: 11px/14px "DejaVu Sans Condensed", "DejaVu Sans", sans-serif; }
.lab { font-weight: normal; -webkit-text-stroke: 0.3px #000; white-space: nowrap; }
.list { border: 1px solid #fff; border-top-color: #9c9a90; border-left: 2px solid #000; background: #fff; overflow: hidden; white-space: nowrap; }
.list li { height: 14px; padding-left: 2px; }
.list li:first-child { height: 15px; }
.list li.sel { background: #000; color: #fff; }
.dispatcher { left: 241px; top: -1px; width: 453px; height: 264px; }
.dispatcher .wbody { flex-direction: column; padding: 12px 9px 8px; }
.dispatcher .list { flex: 1; margin-top: 7px; }
.dispatcher .lab { padding-left: 2px; }
.page { left: 441px; top: 22px; width: 449px; height: 257px; }
.page .wbody { padding: 12px 12px 7px; gap: 14px; }
.fields { flex: 1; display: flex; flex-direction: column; }
.fields .lab { padding-left: 2px; }
.fields input { height: 18px; margin: 7px 0 6px 4px; padding-left: 1px; border: 1px solid #7f9db9; background: #fff; }
.fields .list { flex: 1; margin-top: 6px; }
.btns { display: flex; flex-direction: column; }
.xp { border: 1px solid #003c74; border-radius: 3px; width: 90px; height: 22px; padding-right: 3px; background: linear-gradient(#fff, #f3f1ec 80%, #dcd6cc); }
.xp.default { box-shadow: 0 0 0 2px #9ab8f0 inset; }
.page .btns { gap: 8px; }
.page .xp:first-child { margin-bottom: 20px; }
.element { left: 389px; top: 357px; width: 517px; height: 116px; background: #b5ccf2; }
.element .wbody { padding: 7px 8px; gap: 8px; }
.form { flex: 1; display: grid; grid-template-columns: 116px 1fr; grid-auto-rows: 18px; row-gap: 8px; align-content: start; }
.form .lab { padding-top: 4px; }
.caret-box { display: flex; align-items: center; border: 1px solid #7f9db9; background: #fff; }
.caret-box input { field-sizing: content; padding-left: 1px; border-right: 1px solid #000; height: 14px; outline: 0; }
.form select { appearance: none; border: 1px solid #7f9db9; padding-left: 1px; background: #fff url("data:image/svg+xml,%3Csvg xmlns='http://www.w3.org/2000/svg' width='15' height='14'%3E%3Crect width='15' height='14' rx='2' fill='%23c3d3fd'/%3E%3Cpath d='M4 5l3.500 3.500L11 5' fill='none' stroke='%234d6185' stroke-width='2'/%3E%3C/svg%3E") no-repeat right 1px center; }
.element .btns { gap: 9px; }
.element .xp { width: 80px; }
.schema { left: 247px; right: 246px; top: 509px; bottom: 0; border-bottom: 0; }
.schema h3 { display: flex; align-items: center; height: 31px; line-height: 30px; padding: 2px 14px 0 8px; gap: 16px; font-size: 12px; color: #6a7388; background: linear-gradient(#dde9ff, #cfe1ff 10px, #e3efff 29px, #a9cdf7 29px); }
.schema h3 span { flex: 1; margin-left: -12px; }
.sbody { flex: 1; display: grid; grid-template-columns: 1fr 17px; grid-template-rows: 1fr 17px; margin: 0 5px 6px; background: #f4f2f6; }
.canvas { position: relative; background: #efeff8; }
.links { position: absolute; left: 0; top: 0; }
.links text { font: bold 10px "DejaVu Sans", sans-serif; }
.node { position: absolute; width: 144px; height: 144px; border: 1px solid #36598f; border-radius: 6px 6px 0 0; background: #b5ccf2; padding: 0 3px 3px; display: flex; flex-direction: column; overflow: hidden; }
.node h4 { margin: 0 -3px; height: 21px; line-height: 24px; padding-left: 8px; font-size: 12px; color: #6a7388; background: linear-gradient(#dde9ff, #cfe1ff 8px, #e3efff 19px, #a9cdf7 19px); }
.node ul { flex: 1; background: #fff; overflow: hidden; }
.node li { display: flex; align-items: center; height: 16px; padding-left: 31px; white-space: nowrap; }
.node li svg { margin: 0 7px 2px -15px; }
.node li.sel { background: #dedede; }
.n1 { left: 13px; top: 10px; } .n2 { left: 189px; top: 8px; height: 197px; } .n3 { left: 376px; top: 9px; } .n4 { left: 567px; top: 11px; }
.sv, .sh { display: flex; align-items: center; justify-content: space-between; }
.sv { flex-direction: column; padding: 6px 0; } .sh { padding: 0 5px; }
.grip { width: 15px; height: 17px; border: 1px solid #7186a8; border-radius: 2px; background: repeating-linear-gradient(#8b9cbb 0 1px, #e6ecf5 1px 3px) content-box, #dde6f2; padding: 3px; }
.sv .grip { margin: 4px 0 auto; } .sh .grip { margin: 0 auto 0 6px; width: 17px; height: 15px; background: repeating-linear-gradient(90deg, #8b9cbb 0 1px, #e6ecf5 1px 3px) content-box, #dde6f2; }

/* Status bar and taskbar */
.status { display: grid; grid-template-columns: 1fr 1fr; align-items: center; height: 26px; padding: 0 12px 3px 8px; color: #15428b; border-top: 1px solid #5688c7; background: linear-gradient(#d9e8fd, #c4dbfa 11px, #b3cef3 12px, #d3e6fc 22px, #3b77dd 23px, #2a62d8); }
.status .r { text-align: right; border-left: 1px solid #8fb0de; line-height: 20px; }
.taskbar { display: flex; height: 30px; color: #fff; background: linear-gradient(#3d80f0, #2560dc 4px, #245bd9 22px, #1c47b4); }
.start { display: flex; align-items: center; gap: 4px; width: 96px; padding-left: 11px; border-radius: 0 10px 12px 0; background: linear-gradient(#64b064, #388f38 6px, #3a953a 20px, #2a722a); box-shadow: -2px 0 4px #1d561d inset; }
.start span { font: italic bold 17px/24px "Noto Sans", sans-serif; text-shadow: 1px 1px 1px #1b4b1b; }
.ql { display: flex; align-items: center; gap: 7px; width: 170px; margin-left: 11px; padding-left: 8px; border: dotted #173fa8; border-width: 0 2px; }
.more { margin: 0 7px 8px auto; font-size: 14px; }
.tasks { flex: 1; display: flex; gap: 1px; padding: 3px 0 2px; }
.tasks button { display: flex; align-items: center; gap: 4px; width: 159px; padding-left: 11px; border-radius: 2px; background: linear-gradient(#5c9bfa, #3c7ff0 4px, #3a79ec 20px, #2f66d2); white-space: nowrap; }
.tasks button.active { background: #1d4fb4; box-shadow: 1px 1px 2px #12347c inset; }
.tasks, .tray { font-family: "DejaVu Sans Condensed", sans-serif; }
.tray { display: flex; align-items: center; gap: 4px; padding: 0 12px 0 9px; border-left: 2px dotted #173fa8; background: linear-gradient(#3d80f0, #1a73e8 4px, #1768de); }
.tray time { margin-left: 2px; }
```
